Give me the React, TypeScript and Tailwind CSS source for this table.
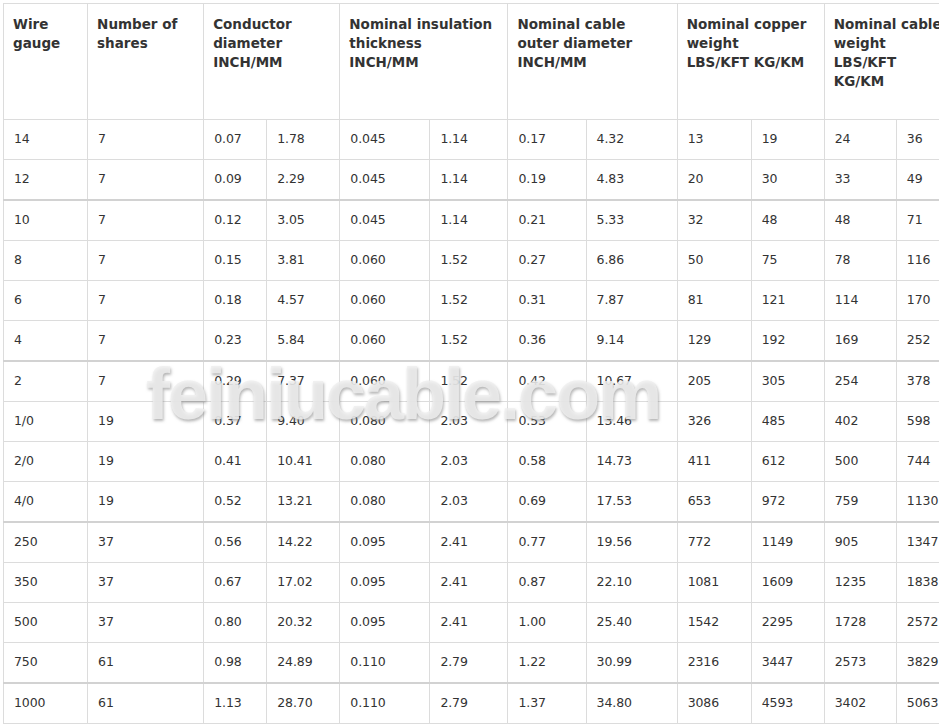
import React from "react";

const rows: string[][] = [
  ["14", "7", "0.07", "1.78", "0.045", "1.14", "0.17", "4.32", "13", "19", "24", "36"],
  ["12", "7", "0.09", "2.29", "0.045", "1.14", "0.19", "4.83", "20", "30", "33", "49"],
  ["10", "7", "0.12", "3.05", "0.045", "1.14", "0.21", "5.33", "32", "48", "48", "71"],
  ["8", "7", "0.15", "3.81", "0.060", "1.52", "0.27", "6.86", "50", "75", "78", "116"],
  ["6", "7", "0.18", "4.57", "0.060", "1.52", "0.31", "7.87", "81", "121", "114", "170"],
  ["4", "7", "0.23", "5.84", "0.060", "1.52", "0.36", "9.14", "129", "192", "169", "252"],
  ["2", "7", "0.29", "7.37", "0.060", "1.52", "0.42", "10.67", "205", "305", "254", "378"],
  ["1/0", "19", "0.37", "9.40", "0.080", "2.03", "0.53", "13.46", "326", "485", "402", "598"],
  ["2/0", "19", "0.41", "10.41", "0.080", "2.03", "0.58", "14.73", "411", "612", "500", "744"],
  ["4/0", "19", "0.52", "13.21", "0.080", "2.03", "0.69", "17.53", "653", "972", "759", "1130"],
  ["250", "37", "0.56", "14.22", "0.095", "2.41", "0.77", "19.56", "772", "1149", "905", "1347"],
  ["350", "37", "0.67", "17.02", "0.095", "2.41", "0.87", "22.10", "1081", "1609", "1235", "1838"],
  ["500", "37", "0.80", "20.32", "0.095", "2.41", "1.00", "25.40", "1542", "2295", "1728", "2572"],
  ["750", "61", "0.98", "24.89", "0.110", "2.79", "1.22", "30.99", "2316", "3447", "2573", "3829"],
  ["1000", "61", "1.13", "28.70", "0.110", "2.79", "1.37", "34.80", "3086", "4593", "3402", "5063"],
];

const widths = [84, 116, 63, 73, 90, 78, 78, 91, 74, 73, 72, 70];

// rows that sit under a heavier rule in the source picture
const heavy = new Set([2, 6, 10, 14]);

function Head({ lines, span = 1 }: { lines: string[]; span?: number }) {
  return (
    <th
      colSpan={span}
      className="border border-[#dcdcdc] align-top text-left font-bold text-[#333] pl-[9px] pr-1 pt-[11px] whitespace-nowrap"
    >
      {lines.map((l, i) => (
        <div key={i} className="leading-[19px]">
          {l}
        </div>
      ))}
    </th>
  );
}

export default function App() {
  return (
    <div
      className="relative w-[943px] h-[727px] overflow-hidden bg-white pl-[3px] pt-[3px]"
      style={{ fontFamily: '"DejaVu Sans", Verdana, sans-serif' }}
    >
      <div className="w-[936px] overflow-hidden">
        <table className="table-fixed border-collapse w-[964px] text-[13.5px] text-[#333]">
          <colgroup>
            {widths.map((w, i) => (
              <col key={i} style={{ width: w }} />
            ))}
          </colgroup>
          <thead>
            <tr className="h-[116px]">
              <Head lines={["Wire", "gauge"]} />
              <Head lines={["Number of", "shares"]} />
              <Head lines={["Conductor", "diameter", "INCH/MM"]} span={2} />
              <Head lines={["Nominal insulation", "thickness", "INCH/MM"]} span={2} />
              <Head lines={["Nominal cable", "outer diameter", "INCH/MM"]} span={2} />
              <Head lines={["Nominal copper", "weight", "LBS/KFT KG/KM"]} span={2} />
              <Head lines={["Nominal cable", "weight", "LBS/KFT", "KG/KM"]} span={2} />
            </tr>
          </thead>
          <tbody>
            {rows.map((r, ri) => (
              <tr key={ri} className={heavy.has(ri) ? "h-[41px]" : "h-[40px]"}>
                {r.map((c, ci) => (
                  <td
                    key={ci}
                    className={
                      "border border-[#dcdcdc] pl-[10px] align-middle text-[12.5px] tracking-[-0.1px] " +
                      (heavy.has(ri) ? "border-t-2 border-t-[#d2d2d2]" : "")
                    }
                  >
                    {c}
                  </td>
                ))}
              </tr>
            ))}
          </tbody>
        </table>
      </div>

      <span
        className="pointer-events-none absolute left-[146px] top-[358px] text-[72px] font-bold leading-none tracking-[-2px] text-[rgba(238,238,238,0.85)] [text-shadow:1px_2px_3px_rgba(120,120,120,0.55)]"
        style={{ fontFamily: '"Liberation Sans", Arial, sans-serif' }}
      >
        feiniucable.com
      </span>
    </div>
  );
}
